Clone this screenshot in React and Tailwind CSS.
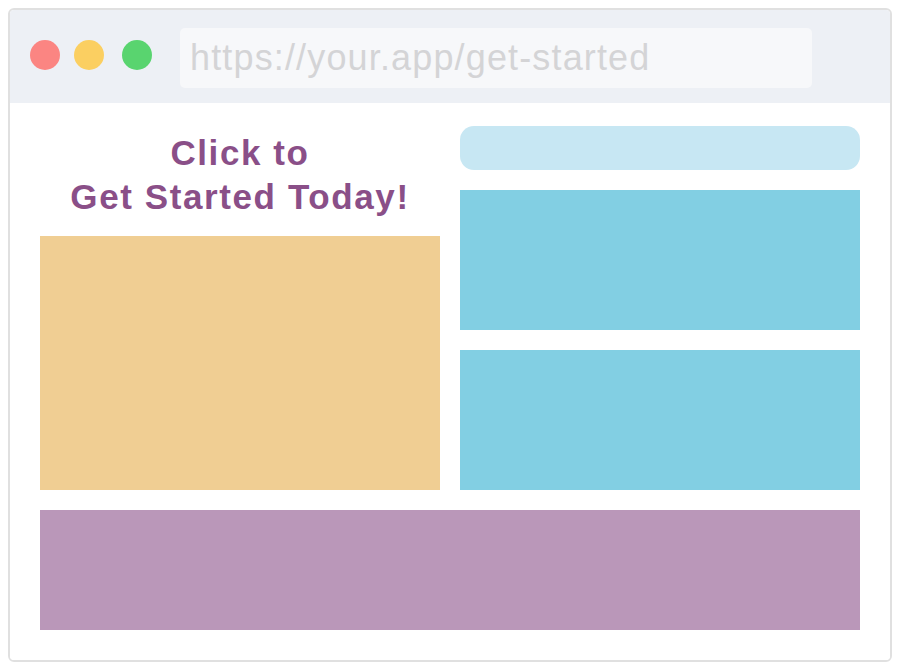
import React from 'react';

const App = () => {
    return (
        <div className="w-[900px] h-[670px] bg-white p-2" style={{ fontFamily: '"Liberation Sans", Arial, sans-serif' }}>
            {/* Browser frame */}
            <div className="w-[884px] h-[654px] border-2 border-[#e0e0e0] rounded-[6px] overflow-hidden flex flex-col">
                {/* Title bar */}
                <div className="h-[93px] shrink-0 bg-[#edf0f5] flex items-start pl-[20px]">
                    <div className="flex gap-[14px] mt-[30px]">
                        <span className="w-[30px] h-[30px] rounded-full bg-[#fb8582]" />
                        <span className="w-[30px] h-[30px] rounded-full bg-[#fbcf61]" />
                        <span className="w-[30px] h-[30px] rounded-full bg-[#59d46f] ml-[4px]" />
                    </div>
                    <div className="ml-[28px] mt-[18px] w-[632px] h-[60px] rounded-[5px] bg-[#f7f8fa] flex items-center pl-[10px]">
                        <span className="text-[36px] leading-none text-[#d4d4d6] tracking-[1.15px]">
                            https://your.app/get-started
                        </span>
                    </div>
                </div>

                {/* Page body */}
                <div className="flex-1 bg-white px-[30px] pt-[23px] flex flex-col gap-[20px]">
                    <div className="grid grid-cols-2 gap-[20px]">
                        {/* Left column */}
                        <div className="flex flex-col">
                            <div className="h-[110px] pt-[5px] text-center">
                                <h1 className="text-[35px] leading-[44px] font-bold tracking-[1.6px] text-[#8a4f88]">
                                    Click to
                                    <br />
                                    Get Started Today!
                                </h1>
                            </div>
                            <div className="h-[254px] bg-[#f0ce93]" />
                        </div>

                        {/* Right column */}
                        <div className="flex flex-col gap-[20px]">
                            <div className="h-[44px] rounded-[14px] bg-[#c7e7f3]" />
                            <div className="h-[140px] bg-[#82cfe3]" />
                            <div className="h-[140px] bg-[#82cfe3]" />
                        </div>
                    </div>

                    {/* Footer block */}
                    <div className="h-[120px] bg-[#ba97b9]" />
                </div>
            </div>
        </div>
    );
};

export default App;
